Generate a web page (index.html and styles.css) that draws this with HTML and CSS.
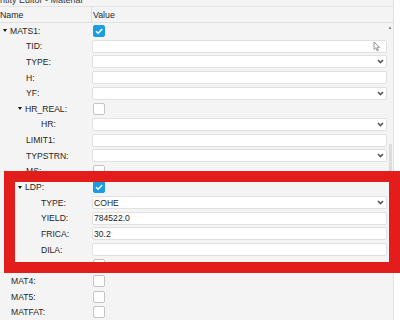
FILE: index.html
```html
<!DOCTYPE html>
<html lang="en">
<head>
  <meta charset="UTF-8" />
  <title>Entity Editor - Material</title>
  <link rel="stylesheet" href="styles.css">
</head>
<body>
  <div class="editor">
    <div class="panel">
      <div class="title"><span>Entity Editor - Material</span></div>
      <div class="head">
        <div class="col-name">Name</div>
        <div class="col-value">Value</div>
      </div>
      <div class="body">
        <div class="rows">
          <div class="row"><div class="name l0"><span class="caret"></span>MATS1:</div><div class="value"><span class="check on"><svg width="12" height="12" viewBox="0 0 12 12"><path d="M3 6.3 L5.1 8.3 L9.2 4" fill="none" stroke="#fff" stroke-width="1.5"/></svg></span></div></div>
          <div class="row"><div class="name l1">TID:</div><div class="value"><div class="field"><span></span><svg class="pointer" width="8" height="11" viewBox="0 0 8 11"><path d="M1 1 L1 8.5 L2.8 6.8 L4.2 10 L5.4 9.4 L4 6.3 L6.6 6.3 Z" fill="#fff" stroke="#8a8a8a" stroke-width="0.9"/></svg></div></div></div>
          <div class="row"><div class="name l1">TYPE:</div><div class="value"><div class="field"><span></span><svg class="chev" width="7" height="5" viewBox="0 0 7 5"><path d="M1 1 L3.5 3.6 L6 1" fill="none" stroke="#555" stroke-width="1.6"/></svg></div></div></div>
          <div class="row"><div class="name l1">H:</div><div class="value"><div class="field"></div></div></div>
          <div class="row"><div class="name l1">YF:</div><div class="value"><div class="field"><span></span><svg class="chev" width="7" height="5" viewBox="0 0 7 5"><path d="M1 1 L3.5 3.6 L6 1" fill="none" stroke="#555" stroke-width="1.6"/></svg></div></div></div>
          <div class="row"><div class="name l1"><span class="caret"></span>HR_REAL:</div><div class="value"><span class="check"></span></div></div>
          <div class="row"><div class="name l2">HR:</div><div class="value"><div class="field"><span></span><svg class="chev" width="7" height="5" viewBox="0 0 7 5"><path d="M1 1 L3.5 3.6 L6 1" fill="none" stroke="#555" stroke-width="1.6"/></svg></div></div></div>
          <div class="row"><div class="name l1">LIMIT1:</div><div class="value"><div class="field"></div></div></div>
          <div class="row"><div class="name l1">TYPSTRN:</div><div class="value"><div class="field"><span></span><svg class="chev" width="7" height="5" viewBox="0 0 7 5"><path d="M1 1 L3.5 3.6 L6 1" fill="none" stroke="#555" stroke-width="1.6"/></svg></div></div></div>
          <div class="row"><div class="name l1">MS:</div><div class="value"><span class="check"></span></div></div>
          <div class="row"><div class="name l1"><span class="caret"></span>LDP:</div><div class="value"><span class="check on"><svg width="12" height="12" viewBox="0 0 12 12"><path d="M3 6.3 L5.1 8.3 L9.2 4" fill="none" stroke="#fff" stroke-width="1.5"/></svg></span></div></div>
          <div class="row"><div class="name l2">TYPE:</div><div class="value"><div class="field"><span>COHE</span><svg class="chev" width="7" height="5" viewBox="0 0 7 5"><path d="M1 1 L3.5 3.6 L6 1" fill="none" stroke="#555" stroke-width="1.6"/></svg></div></div></div>
          <div class="row"><div class="name l2">YIELD:</div><div class="value"><div class="field"><span>784522.0</span></div></div></div>
          <div class="row"><div class="name l2">FRICA:</div><div class="value"><div class="field"><span>30.2</span></div></div></div>
          <div class="row"><div class="name l2">DILA:</div><div class="value"><div class="field"></div></div></div>
          <div class="row"><div class="name l0"></div><div class="value"><span class="check"></span></div></div>
          <div class="row"><div class="name l0">MAT4:</div><div class="value"><span class="check"></span></div></div>
          <div class="row"><div class="name l0">MAT5:</div><div class="value"><span class="check"></span></div></div>
          <div class="row"><div class="name l0">MATFAT:</div><div class="value"><span class="check"></span></div></div>
        </div>
        <div class="scroll">
          <span class="scroll-up"></span>
          <div class="thumb"></div>
        </div>
      </div>
    </div>
    <div class="annot"></div>
  </div>
</body>
</html>
```

FILE: styles.css
```css
* { box-sizing: border-box; }

body {
  margin: 0;
  background: #fff;
  font-family: "Liberation Sans", Arial, sans-serif;
  font-size: 8.6px;
  color: #262626;
}

.editor {
  position: relative;
  width: 400px;
  height: 320px;
  overflow: hidden;
}

.panel {
  width: 394px;
  height: 320px;
  background: #f4f4f4;
  border-right: 1px solid #e2e2e2;
  display: flex;
  flex-direction: column;
}

.title {
  height: 7px;
  overflow: hidden;
  border-bottom: 1px solid #e4e4e4;
  text-indent: -6px;
  color: #3a3a3a;
  font-size: 9px;
}

.title span {
  display: block;
  margin-top: -5px;
  line-height: 10px;
}

.head {
  display: flex;
  height: 16px;
  border-bottom: 1px solid #e0e0e0;
  font-size: 8.8px;
  line-height: 16px;
}

.col-name {
  width: 92px;
  border-right: 1px solid #e0e0e0;
}

.col-value {
  padding-left: 1px;
}

.body {
  display: flex;
  flex: 1;
}

.rows {
  width: 388px;
  padding-top: 0.3px;
}

.row {
  display: flex;
  align-items: center;
  height: 15.65px;
}

.name {
  width: 92px;
  flex-shrink: 0;
  white-space: nowrap;
  line-height: 10px;
}

.l0 { padding-left: 11px; }
.l1 { padding-left: 26px; }
.l2 { padding-left: 41px; }

.caret {
  display: inline-block;
  width: 0;
  height: 0;
  margin-left: -8px;
  margin-right: 3px;
  vertical-align: 1.5px;
  border-left: 2.5px solid transparent;
  border-right: 2.5px solid transparent;
  border-top: 3px solid #111;
}

.value {
  flex: 1;
  display: flex;
  align-items: center;
}

.field {
  width: 295px;
  height: 13px;
  background: #fff;
  border: 1px solid #e1e1e1;
  border-radius: 2px;
  display: flex;
  align-items: center;
  justify-content: space-between;
  padding: 0 2px 0 1px;
  color: #1e1e1e;
}

.pointer {
  margin-right: 3px;
  margin-top: 1px;
}

.check {
  display: block;
  width: 12px;
  height: 12px;
  margin-left: 1px;
  background: #fff;
  border: 1px solid #c4c4c4;
  border-radius: 2px;
}

.check.on {
  background: #1b9de2;
  border-color: #1b9de2;
}

.check.on svg {
  display: block;
  margin: -1px;
}

.scroll {
  width: 5px;
}

.scroll-up {
  display: block;
  width: 0;
  height: 0;
  margin: 3px 0 0 1px;
  border-left: 1.5px solid transparent;
  border-right: 1.5px solid transparent;
  border-bottom: 3px solid #666;
}

.thumb {
  margin: 115px 0 0 1px;
  width: 3px;
  height: 100px;
  background: #dcdcdc;
}

.annot {
  position: absolute;
  left: 4px;
  top: 171px;
  width: 396px;
  height: 102px;
  border: 11px solid #e31c1c;
}
```
